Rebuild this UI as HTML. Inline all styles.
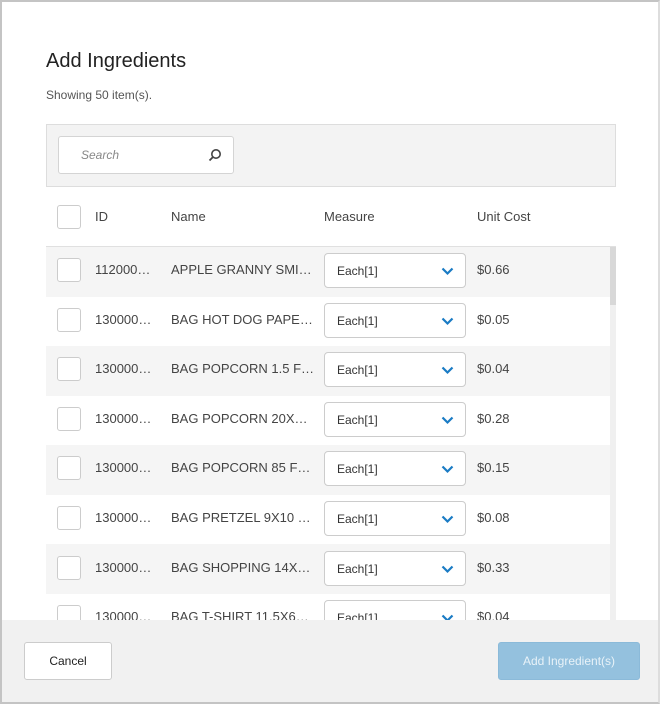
<!DOCTYPE html>
<html><head><style>
*{box-sizing:border-box;margin:0;padding:0}
body{width:660px;height:704px;background:#fff;font-family:"Liberation Sans",sans-serif;position:relative;overflow:hidden;color:#333}
.frame{position:absolute;left:0;top:0;width:660px;height:704px;border:2px solid #c4c4c4;border-right:2px solid #ddd;}
h1{position:absolute;left:46px;top:50px;font-size:20px;font-weight:normal;color:#222}
.sub{position:absolute;left:46px;top:88px;font-size:12px;color:#555}
.tool{position:absolute;left:46px;top:124px;width:570px;height:63px;background:#f3f3f3;border:1px solid #ddd}
.search{position:absolute;left:11px;top:11px;width:176px;height:38px;background:#fff;border:1px solid #d4d4d4;border-radius:3px;font-size:12px;font-style:italic;color:#888;padding:11px 0 0 22px}
.search svg{position:absolute;right:11px;top:11px}
.cb{position:absolute;left:57px;width:24px;height:24px;border:1px solid #ccc;border-radius:3px;background:#fff}
.t{position:absolute;font-size:13px;color:#444;white-space:nowrap}
.row{position:absolute;left:46px;width:564px;height:50px}
.sel{position:absolute;left:324px;width:142px;height:35px;border:1px solid #ccc;border-radius:4px;background:#fff;font-size:12px;color:#333;padding:10px 0 0 12px}
.sel svg{position:absolute;right:11px;top:13px}
.sb{position:absolute;left:610px;top:247px;width:6px;height:373px;background:#f0f0f0}
.sbt{position:absolute;left:610px;top:247px;width:6px;height:58px;background:#d8d8d8}
.foot{position:absolute;left:2px;top:620px;width:656px;height:82px;background:#f1f1f1}
.btn{position:absolute;top:642px;height:38px;border-radius:3px;font-size:12px;text-align:center;line-height:36px}
</style></head><body>
<div class="frame"></div>
<h1>Add Ingredients</h1>
<div class="sub">Showing 50 item(s).</div>
<div class="tool"><div class="search">Search<svg width="14" height="14" viewBox="0 0 14 14"><circle cx="8" cy="6" r="4.2" fill="none" stroke="#444" stroke-width="1.6"/><line x1="5" y1="9" x2="1.5" y2="12.5" stroke="#444" stroke-width="1.8"/></svg></div></div>
<div class="cb" style="top:205px"></div>
<div class="t" style="left:95px;top:209px">ID</div>
<div class="t" style="left:171px;top:209px">Name</div>
<div class="t" style="left:324px;top:209px">Measure</div>
<div class="t" style="left:477px;top:209px">Unit Cost</div>
<div style="position:absolute;left:46px;top:246px;width:570px;height:1px;background:#e0e0e0"></div>

<div class="row" style="top:247px;background:#f5f5f5"></div>
<div class="row" style="top:346px;background:#f5f5f5"></div>
<div class="row" style="top:445px;background:#f5f5f5"></div>
<div class="row" style="top:544px;background:#f5f5f5"></div>

<div id="rows"></div>
<script>
var d=[["112000…","APPLE GRANNY SMI…","$0.66"],["130000…","BAG HOT DOG PAPE…","$0.05"],["130000…","BAG POPCORN 1.5 F…","$0.04"],["130000…","BAG POPCORN 20X…","$0.28"],["130000…","BAG POPCORN 85 F…","$0.15"],["130000…","BAG PRETZEL 9X10 …","$0.08"],["130000…","BAG SHOPPING 14X…","$0.33"],["130000…","BAG T-SHIRT 11.5X6…","$0.04"]];
var h="";d.forEach(function(r,i){var c=270+i*49.6;
h+='<div class="cb" style="top:'+(c-12)+'px"></div>';
h+='<div class="t" style="left:95px;top:'+(c-8)+'px">'+r[0]+'</div>';
h+='<div class="t" style="left:171px;top:'+(c-8)+'px">'+r[1]+'</div>';
h+='<div class="sel" style="top:'+(c-17)+'px">Each[1]<svg width="13" height="9" viewBox="0 0 13 9"><path d="M1.5 1.5 L6.5 6.5 L11.5 1.5" fill="none" stroke="#1a7bc4" stroke-width="2.2"/></svg></div>';
h+='<div class="t" style="left:477px;top:'+(c-8)+'px">'+r[2]+'</div>';});
document.getElementById("rows").innerHTML=h;
</script>
<div class="sb"></div><div class="sbt"></div>
<div class="foot"></div>
<div class="btn" style="left:24px;width:88px;background:#fff;border:1px solid #ccc;color:#222">Cancel</div>
<div class="btn" style="left:498px;width:142px;background:#94c1de;color:#e8f2f8;border:1px solid #8bbad9">Add Ingredient(s)</div>
</body></html>
